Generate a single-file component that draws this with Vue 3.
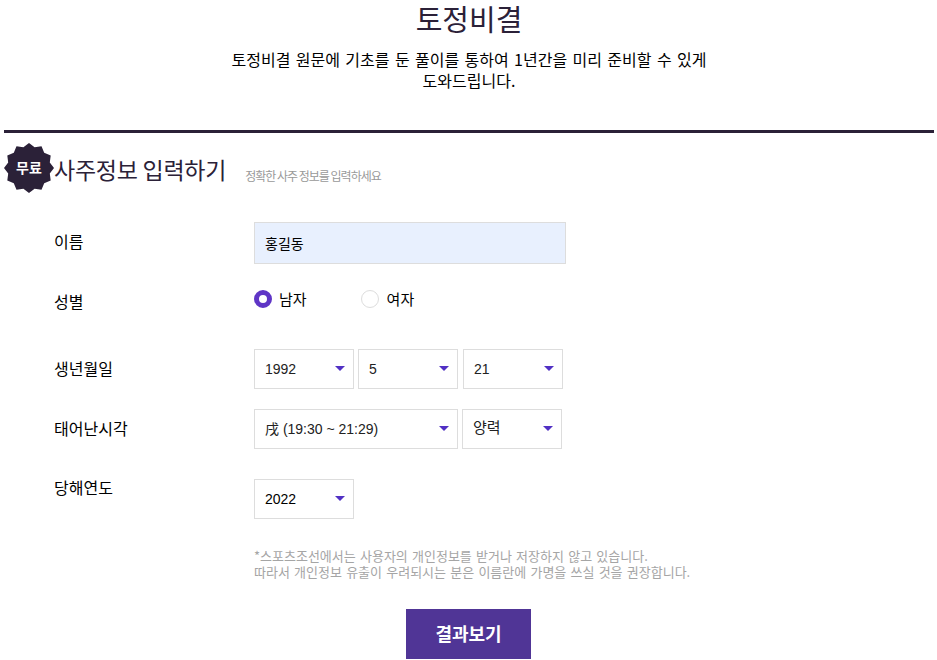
<script setup>
import { ref } from "vue";

const name = ref("홍길동");
const gender = ref("m");
const year = ref("1992");
const month = ref("5");
const day = ref("21");
const time = ref("戌");
const cal = ref("양력");
const thisYear = ref("2022");

// badge outline, 12 bumps
const pts = [];
for (let i = 0; i < 24; i++) {
  const r = i % 2 === 0 ? 25 : 21.5;
  const a = (Math.PI * 2 * i) / 24 - Math.PI / 2;
  pts.push((25 + r * Math.cos(a)).toFixed(1) + "," + (25 + r * Math.sin(a)).toFixed(1));
}
const badgePoints = pts.join(" ");
</script>

<template>
  <div class="page">
    <div class="intro">
      <h1>토정비결</h1>
      <p>토정비결 원문에 기초를 둔 풀이를 통하여 1년간을 미리 준비할 수 있게<br>도와드립니다.</p>
    </div>

    <div class="section">
      <div class="section-head">
        <div class="badge">
          <svg width="50" height="50" viewBox="0 0 50 50"><polygon :points="badgePoints" fill="#2b2138" /></svg>
          <span>무료</span>
        </div>
        <h2>사주정보 입력하기</h2>
        <span class="hint">정확한 사주 정보를 입력하세요</span>
      </div>

      <div class="form">
        <div class="row row-name">
          <label>이름</label>
          <input class="text-input" type="text" v-model="name">
        </div>

        <div class="row row-gender">
          <label>성별</label>
          <div class="radios">
            <div class="radio" @click="gender = 'm'">
              <i :class="['dot', { on: gender === 'm' }]"></i>남자
            </div>
            <div class="radio" @click="gender = 'f'">
              <i :class="['dot', { on: gender === 'f' }]"></i>여자
            </div>
          </div>
        </div>

        <div class="row row-birth">
          <label>생년월일</label>
          <div class="selects">
            <div class="sel w100"><select v-model="year"><option>1992</option></select></div>
            <div class="sel w100"><select v-model="month"><option>5</option></select></div>
            <div class="sel w100 gap-more"><select v-model="day"><option>21</option></select></div>
          </div>
        </div>

        <div class="row row-time">
          <label>태어난시각</label>
          <div class="selects">
            <div class="sel w204"><select v-model="time"><option value="戌">戌 (19:30 ~ 21:29)</option></select></div>
            <div class="sel w100"><select class="ko" v-model="cal"><option>양력</option></select></div>
          </div>
        </div>

        <div class="row row-year">
          <label>당해연도</label>
          <div class="selects">
            <div class="sel w100"><select class="dark" v-model="thisYear"><option>2022</option></select></div>
          </div>
        </div>

        <p class="notice">*스포츠조선에서는 사용자의 개인정보를 받거나 저장하지 않고 있습니다.<br>따라서 개인정보 유출이 우려되시는 분은 이름란에 가명을 쓰실 것을 권장합니다.</p>
      </div>

      <div class="btn-wrap">
        <button type="button" class="result-btn">결과보기</button>
      </div>
    </div>
  </div>
</template>

<style scoped>
* {
  box-sizing: border-box;
  margin: 0;
  padding: 0;
}

.page {
  width: 937px;
  height: 660px;
  overflow: hidden;
  padding: 0 3px 0 4px;
  font-family: "Noto Sans CJK KR", "Liberation Sans", sans-serif;
  color: #000;
}

.intro {
  height: 130px;
  text-align: center;
}

.intro h1 {
  font-size: 29px;
  line-height: 36px;
  font-weight: 400;
  color: #2b2138;
}

.intro p {
  margin-top: 13px;
  font-size: 16px;
  line-height: 21px;
  word-spacing: 1.8px;
}

.section {
  border-top: 3px solid #2b2138;
}

.section-head {
  display: flex;
  align-items: flex-start;
  padding-top: 10px;
  height: 89px;
}

.badge {
  position: relative;
  width: 50px;
  height: 50px;
  flex: none;
}

.badge svg {
  display: block;
}

.badge span {
  position: absolute;
  inset: 0;
  display: flex;
  align-items: center;
  justify-content: center;
  padding-bottom: 2px;
  color: #fff;
  font-size: 14px;
  font-weight: 700;
}

.section-head h2 {
  font-size: 23px;
  line-height: 30px;
  font-weight: 400;
  letter-spacing: -0.25px;
  color: #2b2138;
  margin-top: 11px;
}

.hint {
  margin-left: 19px;
  margin-top: 24px;
  font-size: 12px;
  line-height: 18px;
  letter-spacing: -1px;
  color: #999;
}

.form {
  padding-left: 50px;
}

.row {
  display: flex;
  align-items: flex-start;
}

.row label {
  width: 200px;
  flex: none;
  font-size: 16px;
  line-height: 20px;
}

.row-name {
  height: 42px;
  margin-bottom: 16px;
}

.row-name label {
  padding-top: 9px;
}

.text-input {
  width: 312px;
  height: 42px;
  background: #e8f0fe;
  border: 1px solid #ddd;
  padding: 0 10px;
  font: inherit;
  font-size: 14px;
  color: #000;
  outline: none;
}

.row-gender {
  height: 33px;
  margin-bottom: 36px;
}

.row-gender label {
  padding-top: 11px;
}

.radios {
  display: flex;
  gap: 54px;
  padding-top: 9px;
}

.radio {
  display: flex;
  align-items: center;
  font-size: 15px;
  line-height: 20px;
  cursor: pointer;
}

.dot {
  width: 18px;
  height: 18px;
  border-radius: 50%;
  border: 1px solid #ddd;
  background: #fff;
  margin-right: 7px;
  flex: none;
}

.dot:not(.on) {
  margin-right: 8px;
}

.dot.on {
  border: 5.5px solid #5f35c6;
}

.row-birth {
  height: 40px;
  margin-bottom: 20px;
}

.row-time {
  height: 40px;
  margin-bottom: 30px;
}

.row-birth label,
.row-time label {
  padding-top: 9px;
}

.row-year {
  height: 40px;
  margin-bottom: 29px;
}

.row-year label {
  line-height: 16px;
}

.selects {
  display: flex;
  gap: 4px;
}

.sel {
  position: relative;
  height: 40px;
  border: 1px solid #ddd;
  background: #fff;
}

.sel::after {
  content: "";
  position: absolute;
  right: 8px;
  top: 16px;
  border-left: 5px solid transparent;
  border-right: 5px solid transparent;
  border-top: 5px solid #5130c4;
  pointer-events: none;
}

.sel select {
  appearance: none;
  width: 100%;
  height: 100%;
  border: none;
  background: transparent;
  padding: 0 10px;
  font-family: "Liberation Sans", "Noto Sans CJK KR", sans-serif;
  font-size: 14px;
  color: #222;
  outline: none;
}

.sel select.ko {
  font-size: 15px;
  padding-bottom: 3px;
}

.sel select.dark {
  color: #000;
}

.w100 {
  width: 100px;
}

.w204 {
  width: 204px;
}

.gap-more {
  margin-left: 1px;
}

.notice {
  margin-left: 200px;
  font-size: 13px;
  line-height: 16px;
  word-spacing: 1.3px;
  color: #a5a5a5;
}

.btn-wrap {
  display: flex;
  justify-content: center;
  margin-top: 29px;
  margin-right: 1px;
}

.result-btn {
  width: 125px;
  height: 50px;
  border: none;
  padding-bottom: 3px;
  background: #503596;
  color: #fff;
  font-family: inherit;
  font-size: 18px;
  font-weight: 700;
}
</style>
